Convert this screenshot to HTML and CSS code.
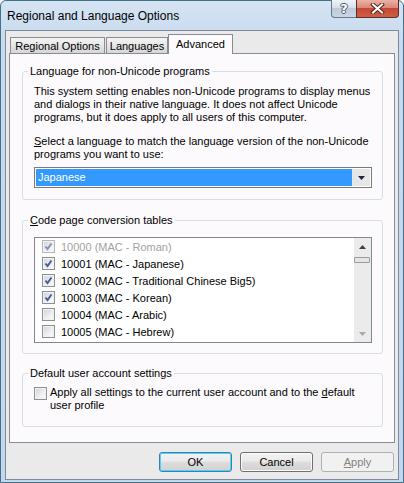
FILE: index.html
```html
<!DOCTYPE html>
<html>
<head>
<meta charset="utf-8">
<title>Regional and Language Options</title>
<link rel="stylesheet" href="styles.css">
</head>
<body>
<div class="window">
  <div class="titlebar">
    <span class="title">Regional and Language Options</span>
    <div class="caption-buttons">
      <div class="cap help">?</div>
      <div class="cap close">
        <svg width="15" height="11" viewBox="0 0 15 11"><path d="M3 1.5 L12 9.5 M12 1.5 L3 9.5" stroke="#5b2620" stroke-width="4" stroke-linecap="square" fill="none"/><path d="M3 1.5 L12 9.5 M12 1.5 L3 9.5" stroke="#ffffff" stroke-width="2" stroke-linecap="square" fill="none"/></svg>
      </div>
    </div>
  </div>
  <div class="client">
    <div class="tabs">
      <div class="tab t-regional">Regional Options</div>
      <div class="tab t-lang">Languages</div>
      <div class="tab active t-adv">Advanced</div>
    </div>
    <div class="panel">
      <fieldset class="group g1">
        <legend>Language for non-Unicode programs</legend>
        <p class="desc">This system setting enables non-Unicode programs to display menus and dialogs in their native language. It does not affect Unicode programs, but it does apply to all users of this computer.</p>
        <p class="desc sel"><u>S</u>elect a language to match the language version of the non-Unicode programs you want to use:</p>
        <div class="combo">
          <div class="combo-value">Japanese</div>
          <div class="combo-btn"><svg width="7" height="4" viewBox="0 0 7 4"><path d="M0 0 H7 L3.5 4 Z" fill="#1b2440"/></svg></div>
        </div>
      </fieldset>
      <fieldset class="group g2">
        <legend><u>C</u>ode page conversion tables</legend>
        <div class="listbox">
          <ul class="items">
            <li class="item disabled"><span class="cb checked"><svg width="9" height="9" viewBox="0 0 9 9"><path d="M1.5 4.5 L3.5 7 L7.5 1.5" stroke="#8793b8" stroke-width="2" fill="none"/></svg></span>10000 (MAC - Roman)</li>
            <li class="item"><span class="cb checked"><svg width="9" height="9" viewBox="0 0 9 9"><path d="M1.5 4.5 L3.5 7 L7.5 1.5" stroke="#4a5e98" stroke-width="2" fill="none"/></svg></span>10001 (MAC - Japanese)</li>
            <li class="item"><span class="cb checked"><svg width="9" height="9" viewBox="0 0 9 9"><path d="M1.5 4.5 L3.5 7 L7.5 1.5" stroke="#4a5e98" stroke-width="2" fill="none"/></svg></span>10002 (MAC - Traditional Chinese Big5)</li>
            <li class="item"><span class="cb checked"><svg width="9" height="9" viewBox="0 0 9 9"><path d="M1.5 4.5 L3.5 7 L7.5 1.5" stroke="#4a5e98" stroke-width="2" fill="none"/></svg></span>10003 (MAC - Korean)</li>
            <li class="item"><span class="cb"></span>10004 (MAC - Arabic)</li>
            <li class="item"><span class="cb"></span>10005 (MAC - Hebrew)</li>
          </ul>
          <div class="vscroll">
            <div class="sb-arrow"><svg width="7" height="4" viewBox="0 0 7 4"><path d="M0 4 H7 L3.5 0 Z" fill="#404040"/></svg></div>
            <div class="sb-thumb"></div>
            <div class="sb-track"></div>
            <div class="sb-arrow"><svg width="7" height="4" viewBox="0 0 7 4"><path d="M0 0 H7 L3.5 4 Z" fill="#a9a9a9"/></svg></div>
          </div>
        </div>
      </fieldset>
      <fieldset class="group g3">
        <legend>Default user account settings</legend>
        <div class="check-row">
          <span class="cb"></span>
          <span class="check-label">Apply all settings to the current user account and to the <u>d</u>efault user profile</span>
        </div>
      </fieldset>
    </div>
    <div class="buttons">
      <div class="btn default">OK</div>
      <div class="btn">Cancel</div>
      <div class="btn disabled"><u>A</u>pply</div>
    </div>
  </div>
</div>
</body>
</html>
```
FILE: styles.css
```css
* { box-sizing: border-box; }
html, body { margin: 0; padding: 0; background: #ffffff; }
body {
  font-family: "Liberation Sans", Arial, sans-serif;
  font-size: 11px;
  color: #000;
}
.window {
  width: 404px;
  height: 483px;
  background: linear-gradient(#d6e4f4, #c8daee 40px, #c4d7ec);
  border: 1px solid #3f7388;
  border-radius: 6px 6px 0 0;
  display: flex;
  flex-direction: column;
}
.titlebar {
  height: 29px;
  display: flex;
  align-items: center;
  padding-left: 6px;
  padding-right: 4px;
}
.title {
  font-size: 12px;
  color: #000;
  flex: 1;
}
.caption-buttons {
  align-self: flex-start;
  display: flex;
  margin-top: -1px;
}
.cap {
  height: 18px;
  display: flex;
  align-items: center;
  justify-content: center;
  border: 1px solid #6a7889;
  border-top: none;
}
.help {
  width: 25px;
  border-radius: 0 0 0 4px;
  border-right: none;
  background: linear-gradient(#eef3f9, #d6e0eb 45%, #bccadb 50%, #c9d6e4);
  color: #fff;
  font-weight: bold;
  font-size: 13px;
  font-family: "DejaVu Sans", sans-serif;
  text-shadow: -1px 0 #4d5766, 1px 0 #4d5766, 0 -1px #4d5766, 0 1px #4d5766;
}
.close {
  width: 43px;
  border-radius: 0 0 4px 0;
  border-color: #5e2b27;
  background: linear-gradient(#eab2a6, #d9897a 45%, #c44833 50%, #cf5f45);
}
.client {
  margin: 0 4px;
  height: 450px;
  background: #eaeaea;
  border: 1px solid #7d8a9b;
  display: flex;
  flex-direction: column;
}
.tabs {
  display: flex;
  align-items: flex-end;
  height: 19px;
  margin: 3px 0 0 4px;
  position: relative;
  z-index: 1;
}
.tab {
  height: 16px;
  border: 1px solid #898c95;
  border-bottom: none;
  background: linear-gradient(#f4f4f4, #e6e6e6 50%, #d6d6d6);
  display: flex;
  align-items: center;
  justify-content: center;
  padding-top: 1px;
}
.t-regional { width: 95px; }
.t-lang { width: 62px; margin-left: 1px; }
.t-adv { width: 65px; }
.tab.active {
  height: 20px;
  margin-bottom: -1px;
  background: #fcfafc;
  padding-top: 0;
  padding-bottom: 1px;
}
.panel {
  margin: 0 3px;
  height: 390px;
  border: 1px solid #898c95;
  background: #fcfafc;
  display: flex;
  flex-direction: column;
}
.group {
  margin: 10px 11px 0 12px;
  padding: 7px 10px 11px 11px;
  border: 1px solid #d5dfe5;
  border-radius: 3px;
  min-width: 0;
}
.group legend {
  padding: 0 2px;
  margin-left: -6px;
  line-height: 14px;
  height: 14px;
}
.desc {
  margin: 0;
  line-height: 13px;
}
.desc.sel { margin-top: 11px; }
.combo {
  margin-top: 6px;
  height: 21px;
  border: 1px solid #7a7a7a;
  padding: 1px;
  display: flex;
  background: #fff;
}
.combo-value {
  flex: 1;
  background: #3399ff;
  color: #fff;
  padding-left: 2px;
  line-height: 17px;
}
.combo-btn {
  width: 18px;
  display: flex;
  align-items: center;
  justify-content: center;
  background: #e6e6e6;
}
.g2 { padding-top: 10px; padding-bottom: 10px; margin-top: 13px; }
.listbox {
  height: 106px;
  border: 1px solid #828790;
  background: #fff;
  display: flex;
}
.items {
  list-style: none;
  margin: 0;
  padding: 0;
  flex: 1;
}
.item {
  height: 17px;
  display: flex;
  align-items: center;
  padding-left: 7px;
}
.item.disabled { color: #a2a2a2; }
.cb {
  width: 13px;
  height: 13px;
  flex: none;
  border: 1px solid #8f8f8f;
  background: linear-gradient(135deg, #cdd1d6, #eef0f2 60%, #fbfbfb);
  box-shadow: inset 0 0 0 1px #f2f2f2;
  display: flex;
  align-items: center;
  justify-content: center;
  margin-right: 6px;
}
.item.disabled .cb { border-color: #b6b6b6; }
.vscroll {
  width: 17px;
  background: #ebebeb;
  display: flex;
  flex-direction: column;
}
.sb-arrow {
  height: 17px;
  display: flex;
  align-items: center;
  justify-content: center;
}
.sb-thumb {
  height: 6px;
  margin: 2px 1px 0 0;
  border: 1px solid #9c9c9c;
  border-radius: 1px;
  background: #e4e4e4;
}
.sb-track { flex: 1; }
.g3 { margin-top: 12px; padding-top: 6px; padding-bottom: 14px; }
.check-row {
  display: flex;
  align-items: flex-start;
}
.check-row .cb { margin-top: 1px; margin-right: 3px; }
.check-label {
  line-height: 13px;
  flex: 1;
}
.buttons {
  display: flex;
  justify-content: flex-end;
  gap: 8px;
  padding: 9px 4px 0 0;
}
.btn {
  width: 73px;
  height: 20px;
  border: 1px solid #707070;
  border-radius: 3px;
  background: linear-gradient(#f3f3f3, #ebebeb 45%, #dddddd 50%, #d1d1d1);
  display: flex;
  align-items: center;
  justify-content: center;
  box-shadow: inset 0 0 0 1px #fbfbfb;
}
.btn.default {
  border-color: #3c7fb1;
  box-shadow: inset 0 0 0 1px #4ad6fb;
}
.btn.disabled {
  border-color: #adb2b5;
  color: #838383;
  background: #f1f1f1;
  box-shadow: none;
}
```
